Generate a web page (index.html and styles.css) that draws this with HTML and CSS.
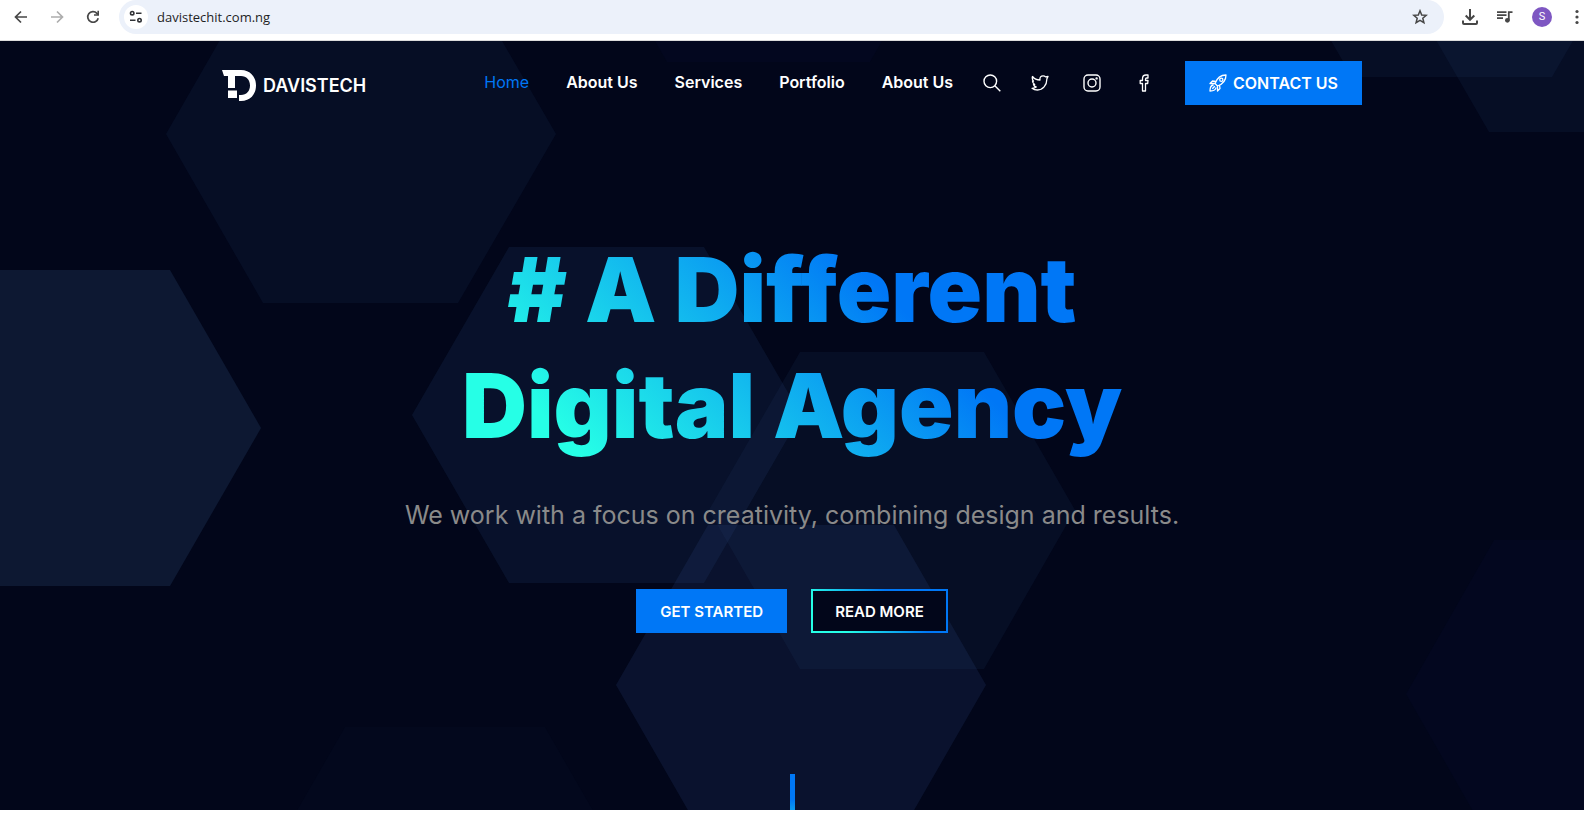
FILE: index.html
```html
<!DOCTYPE html>
<html lang="en">
<head>
<meta charset="utf-8">
<meta name="viewport" content="width=device-width, initial-scale=1">
<title>Davistech</title>
<link rel="stylesheet" href="styles.css">
</head>
<body>
<div class="toolbar">
  <button class="tool" type="button" aria-label="Back"><svg width="14" height="14" viewBox="0 0 14 14"><path d="M13 7H2M7 1.500L1.500 7L7 12.500" fill="none" stroke="#474747" stroke-width="1.700"/></svg></button>
  <button class="tool" type="button" aria-label="Forward"><svg width="14" height="14" viewBox="0 0 14 14"><path d="M1 7H12M7 1.500L12.500 7L7 12.500" fill="none" stroke="#adadad" stroke-width="1.700"/></svg></button>
  <button class="tool" type="button" aria-label="Reload"><svg width="14" height="14" viewBox="0 0 14 14"><path d="M12.200 8.200A5.300 5.300 0 1 1 10.900 3.300L12 4.500" fill="none" stroke="#474747" stroke-width="1.700"/><path d="M13 .8V5.800H8V4.300H11.400V.8z" fill="#474747"/></svg></button>
  <form class="address">
    <button class="site-info" type="button" aria-label="Site information"><svg width="14" height="14" viewBox="0 0 14 14" fill="none" stroke="#303236" stroke-width="1.600"><circle cx="3.200" cy="3.200" r="1.700"/><path d="M7 3.200H12.500M1 10.200H6.500"/><circle cx="10.500" cy="10.200" r="1.700"/></svg></button>
    <input class="url" type="text" value="davistechit.com.ng" aria-label="Address">
    <button class="tool" type="button" aria-label="Bookmark"><svg width="16" height="16" viewBox="0 0 16 16"><path d="M8 1.800L9.700 6L14.200 6.300L10.800 9.200L11.900 13.700L8 11.300L4.100 13.700L5.200 9.200L1.800 6.300L6.300 6z" fill="none" stroke="#474747" stroke-width="1.500"/></svg></button>
  </form>
  <div class="tools">
    <button class="tool" type="button" aria-label="Downloads"><svg width="16" height="16" viewBox="0 0 16 16" fill="none" stroke="#474747" stroke-width="2"><path d="M8 0V10.500M3.700 6.500L8 10.800L12.300 6.500M1 11.500V14Q1 15 2 15H14Q15 15 15 14V11.500"/></svg></button>
    <button class="tool" type="button" aria-label="Media"><svg width="16" height="14" viewBox="0 0 16 14"><path d="M0 2.200H9.500M0 5.200H9.500M0 8.200H6M11.800 10V2.200H15.500" fill="none" stroke="#474747" stroke-width="1.800"/><circle cx="10.400" cy="10.300" r="2.400" fill="#474747"/></svg></button>
    <button class="avatar" type="button">S</button>
    <button class="tool tool-menu" type="button" aria-label="Menu"><svg width="4" height="16" viewBox="0 0 4 16" fill="#474747"><circle cx="2" cy="2.500" r="1.600"/><circle cx="2" cy="8" r="1.600"/><circle cx="2" cy="13.500" r="1.600"/></svg></button>
  </div>
</div>

<main class="hero">
  <svg class="hexagons" viewBox="0 0 1584 769" preserveAspectRatio="xMidYMin slice" aria-hidden="true">
    <path class="hex-faint" d="M667 21H870L971-155H566zM1406 653L1494 499H1672L1760 653L1672 807H1494z"/>
    <path class="hex-shade" d="M345 686H545L645 860H245z"/>
    <path class="hex-dim" d="M166 93L263-76H458L556 93L458 262H263z"/>
    <path class="hex-dim" d="M1252-137L1352 36H1552L1652-137z"/>
    <path class="hex-dim" d="M1387-86L1489 91H1690L1790-86z"/>
    <path class="hex-bright" d="M-103 387L-12 229H170L261 387L170 545H-12z"/>
    <path class="hex-mid" d="M412 374L509 206H704L801 374L704 542H509z"/>
    <path class="hex-dim" d="M709 469L800 311H984L1075 469L984 628H800z"/>
    <path class="hex-soft" d="M616 644L708 484H894L986 644L894 804H708z"/>
  </svg>

  <header class="header">
    <a class="brand" href="#">
      <svg width="34" height="31" viewBox="0 0 34 31" fill="#fff"><path d="M0 0H19C28 0 34 6.500 34 15.500S28 31 19 31H17V25H19C24.500 25 28 21 28 15.500S24.500 6 19 6H13V18H6V6H2z"/><path d="M6 20.500H15V28H6z"/></svg>
      <span>DAVISTECH</span>
    </a>
    <nav class="nav">
      <a class="nav-link nav-link-active" href="#">Home</a>
      <a class="nav-link" href="#">About Us</a>
      <a class="nav-link" href="#">Services</a>
      <a class="nav-link" href="#">Portfolio</a>
      <a class="nav-link" href="#">About Us</a>
    </nav>
    <button class="search" type="button" aria-label="Search"><svg width="18" height="18" viewBox="0 0 18 18" fill="none" stroke="#fff" stroke-width="1.400"><circle cx="7.300" cy="7.300" r="6.300"/><path d="M11.800 11.800L17.300 17.300"/></svg></button>
    <div class="social">
      <a href="#" aria-label="Twitter"><svg width="18" height="18" viewBox="0 0 18 18" fill="none" stroke="#fff" stroke-width="1.300" stroke-linejoin="round"><path d="M1.500 2.500C3.400 5 6 6 9 6C8.500 3.500 10 1.800 12.100 1.800C13.200 1.800 14 2.200 14.600 2.900L17 2.400L15.800 5C16 11.500 11.500 16 6.500 16C4.200 16 2.400 15.400 1 14.300C2.800 14.300 4.200 14 5.200 13C3.700 12.600 2.800 11.600 2.500 10.500H3.700C2.300 9.600 1.500 8.500 1.500 7L2.500 7.200C1.300 5.700 1 4 1.500 2.500z"/></svg></a>
      <a href="#" aria-label="Instagram"><svg width="18" height="18" viewBox="0 0 18 18" fill="none" stroke="#fff" stroke-width="1.400"><rect x="1" y="1" width="16" height="16" rx="4"/><circle cx="9" cy="9" r="4"/><circle cx="13.600" cy="4.400" r=".5"/></svg></a>
      <a href="#" aria-label="Facebook"><svg width="18" height="18" viewBox="0 0 18 18" fill="none" stroke="#fff" stroke-width="1.300" stroke-linejoin="round"><path d="M7.500 17V9.500H5.200V6.500H7.500V4.600C7.500 2.300 8.800 1 11 1H13V4H11.700C10.800 4 10.500 4.400 10.500 5.200V6.500H13L12.700 9.500H10.500V17z"/></svg></a>
    </div>
    <a class="button button-solid" href="#">
      <svg width="18" height="18" viewBox="0 0 18 18" fill="none" stroke="#fff" stroke-width="1.300" stroke-linejoin="round"><path d="M6 9.500C8 4 11.500 1 17 1C17 6.500 14 10 8.500 12zM6.800 7.500L3.500 7L1 9.500L6 9.500M10.500 11.200L11 14.500L8.500 17L8.500 12M4.500 11C1.500 11.300 1 13.500 1 17C4.500 17 6.700 16.500 7 13.500M3.300 14.700L5.800 12.200"/><circle cx="12.300" cy="5.700" r="1.600"/></svg>
      CONTACT US
    </a>
  </header>

  <section class="intro">
    <h1 class="title"># A Different<br>Digital Agency</h1>
    <p class="lead">We work with a focus on creativity, combining design and results.</p>
    <div class="actions">
      <a class="button button-solid" href="#">GET STARTED</a>
      <a class="button button-outline" href="#">READ MORE</a>
    </div>
  </section>
  <div class="scroll-line"></div>
</main>
</body>
</html>
```
FILE: styles.css
```css
* { box-sizing: border-box; }

body {
  display: flex;
  flex-direction: column;
  min-height: 100vh;
  margin: 0;
  padding: 0 1px 9px 0;
  background: #fff;
  font-family: Inter, "Liberation Sans", sans-serif;
}

a { color: inherit; text-decoration: none; }
svg { display: block; flex: none; }
button { padding: 0; border: 0; background: none; font: inherit; }

.toolbar {
  display: flex;
  gap: 22px;
  height: 41px;
  padding: 0 5px 6px 14px;
  border-bottom: 1px solid #dcdcdc;
}

.tool { display: flex; align-items: center; }

.address {
  display: flex;
  flex: 1;
  align-items: center;
  gap: 9px;
  margin: 0 -4px 0 -3px;
  padding: 0 16px 0 5px;
  border-radius: 17px;
  background: #ecf1fa;
}

.site-info {
  display: grid;
  place-items: center;
  width: 24px;
  height: 24px;
  border-radius: 50%;
  background: #fff;
}

.url {
  flex: 1;
  min-width: 0;
  padding: 0;
  border: 0;
  outline: 0;
  background: none;
  color: #1f1f1f;
  font: 13px "Open Sans", sans-serif;
}

.tools { display: flex; align-items: center; gap: 19px; }
.tool-menu { margin-left: 4px; }

.avatar {
  width: 20px;
  height: 20px;
  border-radius: 50%;
  background: #7e57c2;
  color: #fff;
  font: 11px/20px Roboto, sans-serif;
}

.hero {
  position: relative;
  display: flex;
  flex: 1;
  flex-direction: column;
  align-items: center;
  overflow: hidden;
  background: #02061a;
  color: #fff;
}

.hexagons { position: absolute; inset: 0; width: 100%; height: 100%; }
.hex-faint { fill: #03071f; }
.hex-shade { fill: #03081d; }
.hex-dim { fill: #284678; fill-opacity: 0.12; }
.hex-mid { fill: #284678; fill-opacity: 0.18; }
.hex-soft { fill: #325088; fill-opacity: 0.18; }
.hex-bright { fill: #0d1832; }

.header {
  position: relative;
  display: flex;
  align-items: center;
  width: 100%;
  max-width: 1140px;
  padding-top: 20px;
}

.brand {
  display: flex;
  align-items: center;
  gap: 7px;
  margin-right: auto;
  padding-top: 4px;
  font-size: 18px;
  font-weight: 600;
}

.nav { display: flex; gap: 37px; padding-bottom: 2px; font-size: 16px; font-weight: 600; }
.nav-link-active { color: #0077f6; font-weight: 400; }
.search { margin: 0 30px; }
.social { display: flex; gap: 34px; margin-right: 32px; }

.button {
  display: flex;
  align-items: center;
  justify-content: center;
  gap: 6px;
  height: 44px;
  padding: 0 24px;
  font-size: 16px;
  font-weight: 600;
}

.button-solid { background: #0077f6; }

.button-outline {
  border: 2px solid transparent;
  background:
    linear-gradient(#02061a, #02061a) padding-box,
    linear-gradient(45deg, #26ffe6 20%, #0077f6 65%) border-box;
}

.intro {
  position: relative;
  display: flex;
  flex-direction: column;
  align-items: center;
  width: 100%;
  max-width: 760px;
  padding-top: 127px;
}

.title {
  width: 100%;
  margin: 0;
  background: linear-gradient(45deg, #26ffe6 18%, #0077f6 65%);
  background-clip: text;
  color: transparent;
  font-family: Inter, sans-serif;
  font-size: 90px;
  font-weight: 900;
  line-height: 116px;
  text-align: center;
}

.lead {
  margin: 31px 0 54px;
  color: #8a8a8a;
  font-size: 25px;
  line-height: 40px;
  white-space: nowrap;
}

.actions { display: flex; gap: 24px; }
.actions .button { font-size: 15px; }
.actions .button-outline { padding: 0 22px; }

.scroll-line {
  position: relative;
  width: 5px;
  height: 36px;
  margin-top: auto;
  background: linear-gradient(#0077f6 70%, #0b9bf0);
}
```
